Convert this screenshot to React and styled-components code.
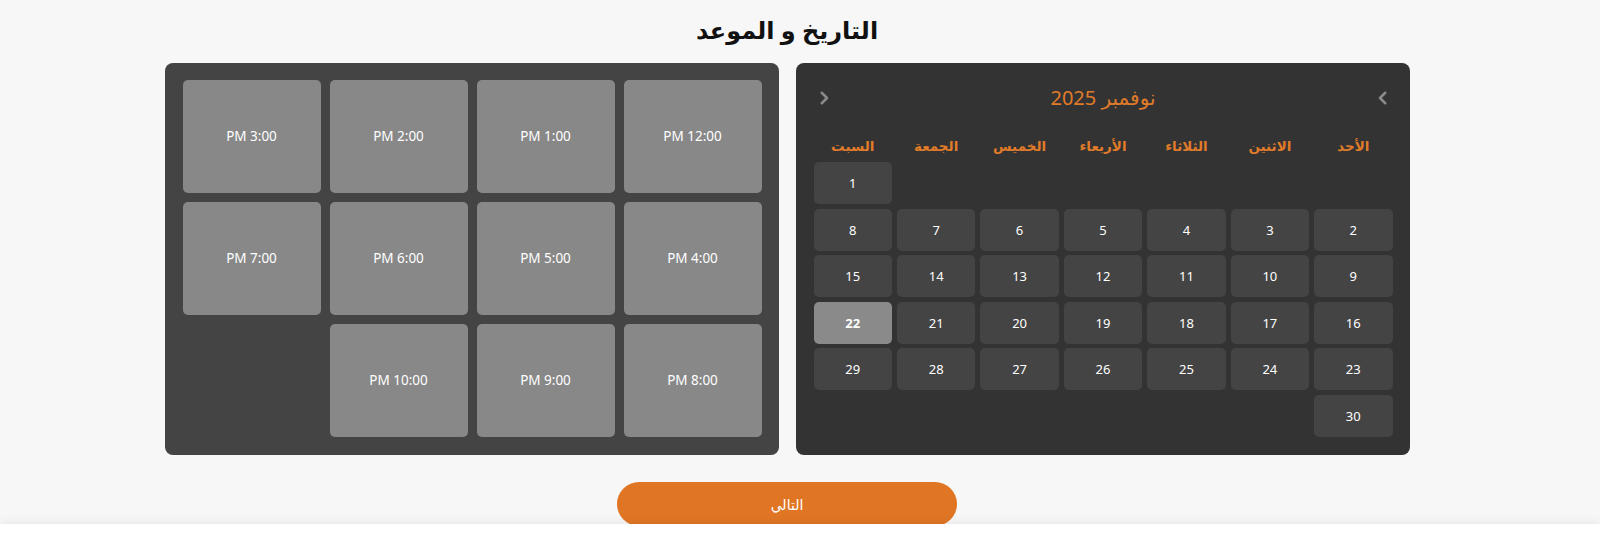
import React from 'react';
import styled, { createGlobalStyle } from 'styled-components';

const GlobalStyle = createGlobalStyle`
  html, body {
    margin: 0;
    padding: 0;
    background: #ffffff;
  }
  body {
    font-family: "Noto Sans", "DejaVu Sans", sans-serif;
  }
`;

const Page = styled.main`
  direction: rtl;
  height: 524px;
  overflow: hidden;
  background: #f7f7f7;
  padding: 10px 26px 0 0;
  box-sizing: border-box;
  display: flex;
  flex-direction: column;
  align-items: center;
`;

const Footer = styled.div`
  height: 23px;
  background: #ffffff;
  box-shadow: 0 -3px 8px rgba(0, 0, 0, 0.06);
  position: relative;
`;

const Title = styled.h1`
  margin: 0;
  font-size: 24px;
  line-height: 40px;
  font-weight: 700;
  color: #111111;
`;

const Panels = styled.div`
  margin-top: 13px;
  display: flex;
  gap: 17px;
`;

const Panel = styled.section`
  width: 614px;
  height: 392px;
  box-sizing: border-box;
  border-radius: 8px;
  background: ${(p) => p.$bg};
  padding: 17px 17px 17px 18px;
`;

const CalHeader = styled.div`
  height: 36px;
  display: flex;
  align-items: center;
  justify-content: space-between;
`;

const Arrow = styled.button`
  border: 0;
  background: none;
  padding: 0;
  width: 20px;
  height: 20px;
  display: flex;
  align-items: center;
  justify-content: center;
  cursor: pointer;
`;

const MonthLabel = styled.div`
  color: #e07b2a;
  font-size: 20px;
  line-height: 36px;
`;

const WeekRow = styled.div`
  margin-top: 15px;
  display: grid;
  grid-template-columns: repeat(7, 1fr);
  column-gap: 5px;
  height: 30px;
  align-items: center;
`;

const WeekDay = styled.div`
  text-align: center;
  color: #e07b2a;
  font-size: 13.5px;
  font-weight: 700;
`;

const DaysGrid = styled.div`
  margin-top: 1px;
  display: grid;
  grid-template-columns: repeat(7, 1fr);
  grid-auto-rows: 42px;
  gap: 4.6px 5px;
`;

const Day = styled.button`
  border: 0;
  border-radius: 5px;
  background: ${(p) => (p.$selected ? '#8a8a8a' : '#444444')};
  color: #ffffff;
  font-family: inherit;
  font-size: 13px;
  font-weight: ${(p) => (p.$selected ? 700 : 400)};
  cursor: pointer;
  grid-column: ${(p) => p.$col || 'auto'};
`;

const TimesGrid = styled.div`
  display: grid;
  grid-template-columns: repeat(4, 1fr);
  grid-auto-rows: 112.5px;
  gap: 9.5px 9px;
`;

const Slot = styled.button`
  border: 0;
  border-radius: 5px;
  background: #888888;
  color: #ffffff;
  font-family: inherit;
  font-size: 13.5px;
  cursor: pointer;
`;

const NextButton = styled.button`
  margin-top: 27px;
  flex-shrink: 0;
  width: 340px;
  height: 44px;
  border: 0;
  border-radius: 22px;
  background: #e07624;
  color: #ffffff;
  font-family: inherit;
  font-size: 14px;
  cursor: pointer;
`;

const Chevron = ({ dir }) => (
  <svg width="18" height="18" viewBox="0 0 24 24" fill="none" stroke="#8a8a8a" strokeWidth="3.4" strokeLinecap="round" strokeLinejoin="round">
    {dir === 'left' ? <path d="M15 5l-7 7 7 7" /> : <path d="M9 5l7 7-7 7" />}
  </svg>
);

const weekDays = ['الأحد', 'الاثنين', 'الثلاثاء', 'الأربعاء', 'الخميس', 'الجمعة', 'السبت'];
const times = ['12:00', '1:00', '2:00', '3:00', '4:00', '5:00', '6:00', '7:00', '8:00', '9:00', '10:00'];
const days = Array.from({ length: 30 }, (_, i) => i + 1);

export default function App() {
  return (
    <>
      <GlobalStyle />
      <Page>
        <Title>التاريخ و الموعد</Title>
        <Panels>
          <Panel $bg="#333333">
            <CalHeader>
              <Arrow aria-label="الشهر السابق">
                <Chevron dir="left" />
              </Arrow>
              <MonthLabel>نوفمبر 2025</MonthLabel>
              <Arrow aria-label="الشهر التالي">
                <Chevron dir="right" />
              </Arrow>
            </CalHeader>
            <WeekRow>
              {weekDays.map((d) => (
                <WeekDay key={d}>{d}</WeekDay>
              ))}
            </WeekRow>
            <DaysGrid>
              {days.map((d) => (
                <Day key={d} $col={d === 1 ? 7 : undefined} $selected={d === 22}>
                  {d}
                </Day>
              ))}
            </DaysGrid>
          </Panel>
          <Panel $bg="#444444">
            <TimesGrid>
              {times.map((t) => (
                <Slot key={t}>{t} PM</Slot>
              ))}
            </TimesGrid>
          </Panel>
        </Panels>
        <NextButton>التالي</NextButton>
      </Page>
      <Footer />
    </>
  );
}
